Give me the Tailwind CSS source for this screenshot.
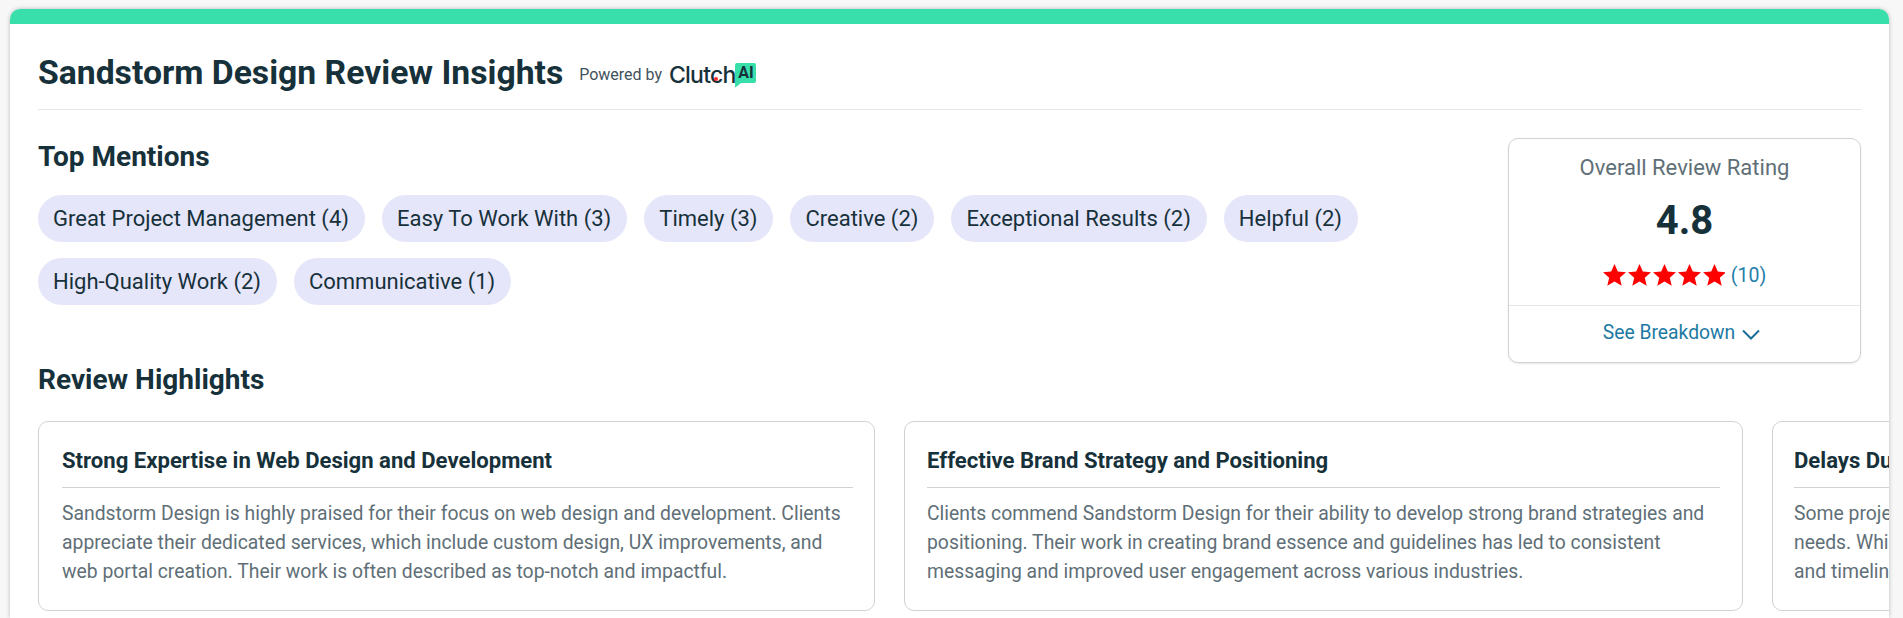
<!DOCTYPE html>
<html lang="en">
<head>
    <meta charset="UTF-8">
    <title>Sandstorm Design Review Insights</title>
    <script src="https://cdn.jsdelivr.net/npm/@tailwindcss/browser@4"></script>
</head>
<body class="bg-[#f7f7f7] font-[Roboto,sans-serif] text-[#17313b] h-[618px] overflow-hidden">
    <div class="pt-[9px] pl-[10px] w-[1889px]">
        <div class="bg-white h-[609px] rounded-t-[10px] overflow-hidden shadow-[0_0_4px_rgba(0,0,0,0.25)]">
            <div class="h-[15px] bg-[#38dfab]"></div>

            <div class="px-[28px]">
                <!-- Header -->
                <div class="h-[86px] pt-[25px] border-b border-[#e6e6e6] flex items-start">
                    <h1 class="text-[33.7px] leading-[48px] font-bold whitespace-nowrap">Sandstorm Design Review Insights</h1>
                    <div class="flex items-center ml-[16px] mt-[13px]">
                        <span class="text-[16px] leading-[24px] text-[#3f525c] whitespace-nowrap">Powered by</span>
                        <span class="relative ml-[7px] text-[23px] leading-[24px] font-medium font-[Inter,sans-serif] tracking-[-0.8px] text-[#17313b]">Clutch<span class="absolute left-[45px] top-[14px] w-[4px] h-[4px] rounded-full bg-[#ff2a2a]"></span></span>
                        <span class="relative translate-y-[1px] w-[21px] h-[25px] flex">
                            <svg class="absolute inset-0" width="21" height="25" viewBox="0 0 21 25"><path d="M2 0h17a2 2 0 0 1 2 2v16a2 2 0 0 1-2 2H6l-5 4a.6.6 0 0 1-1-.5V2a2 2 0 0 1 2-2z" fill="#38dfab"/></svg>
                            <span class="relative w-full text-center text-[16px] leading-[20px] font-bold">AI</span>
                        </span>
                    </div>
                </div>

                <div class="flex justify-between">
                    <!-- Top mentions -->
                    <div class="w-[1420px]">
                        <h2 class="mt-[29px] text-[28px] leading-[36px] font-bold">Top Mentions</h2>
                        <div class="mt-[20px] flex flex-wrap gap-x-[17px] gap-y-[16px] text-[22px] leading-[30px] w-[1420px]">
                            <span class="bg-[#e6e6fa] rounded-full pl-[15px] pr-[16px] py-[8.5px]">Great Project Management (4)</span>
                            <span class="bg-[#e6e6fa] rounded-full pl-[15px] pr-[16px] py-[8.5px]">Easy To Work With (3)</span>
                            <span class="bg-[#e6e6fa] rounded-full pl-[15px] pr-[16px] py-[8.5px]">Timely (3)</span>
                            <span class="bg-[#e6e6fa] rounded-full pl-[15px] pr-[16px] py-[8.5px]">Creative (2)</span>
                            <span class="bg-[#e6e6fa] rounded-full pl-[15px] pr-[16px] py-[8.5px]">Exceptional Results (2)</span>
                            <span class="bg-[#e6e6fa] rounded-full pl-[15px] pr-[16px] py-[8.5px]">Helpful (2)</span>
                            <span class="bg-[#e6e6fa] rounded-full pl-[15px] pr-[16px] py-[8.5px]">High-Quality Work (2)</span>
                            <span class="bg-[#e6e6fa] rounded-full pl-[15px] pr-[16px] py-[8.5px]">Communicative (1)</span>
                        </div>
                    </div>

                    <!-- Rating box -->
                    <div class="mt-[28px] w-[353px] h-[225px] border border-[#d2d2d2] rounded-[10px] shadow-[0_1px_2px_rgba(0,0,0,0.1)] flex flex-col items-center">
                        <div class="mt-[14px] text-[22px] leading-[30px] text-[#5f6f77]">Overall Review Rating</div>
                        <div class="mt-[14px] text-[40px] leading-[48px] font-bold">4.8</div>
                        <div class="mt-[17px] h-[28px] flex items-center">
                            <svg class="w-[122px] h-[24px]" viewBox="0 0 122 24" fill="#ff0000">
                                <path d="M11.500 0l3.300 7.600 8.200.7-6.200 5.400 1.900 8-7.200-4.300-7.200 4.300 1.900-8L0 8.300l8.200-.7z"/>
                                <path transform="translate(25)" d="M11.500 0l3.300 7.600 8.200.7-6.200 5.400 1.900 8-7.200-4.300-7.200 4.300 1.900-8L0 8.300l8.200-.7z"/>
                                <path transform="translate(50)" d="M11.500 0l3.300 7.600 8.200.7-6.200 5.400 1.900 8-7.200-4.300-7.200 4.300 1.900-8L0 8.300l8.200-.7z"/>
                                <path transform="translate(75)" d="M11.500 0l3.300 7.600 8.200.7-6.200 5.400 1.900 8-7.200-4.300-7.200 4.300 1.900-8L0 8.300l8.200-.7z"/>
                                <path transform="translate(100)" d="M11.500 0l3.300 7.600 8.200.7-6.200 5.400 1.900 8-7.200-4.300-7.200 4.300 1.900-8L0 8.300l8.200-.7z"/>
                            </svg>
                            <span class="ml-[6px] text-[19.5px] text-[#1f7ea8]">(10)</span>
                        </div>
                        <div class="mt-[15px] pb-[2px] pr-[6px] w-full border-t border-[#e6e6e6] flex-1 flex items-center justify-center text-[19.3px] text-[#1d7aa3]">
                            See Breakdown
                            <svg class="ml-[7px] mt-[2px]" width="18" height="11" viewBox="0 0 18 11" fill="none" stroke="#1a6f96" stroke-width="2"><path d="M1 1.500l8 8 8-8"/></svg>
                        </div>
                    </div>
                </div>

                <h2 class="text-[28px] leading-[36px] mt-[-1px] font-bold">Review Highlights</h2>

                <!-- Highlights row -->
                <div class="mt-[23px] flex gap-[29px] w-[1851px]">
                    <div class="w-[837px] h-[190px] shrink-0 border border-[#d2d2d2] rounded-[10px] pl-[23px] pr-[21px]">
                        <h3 class="h-[66px] pt-[24px] border-b border-[#d2d2d2] text-[22.1px] leading-[28px] font-bold whitespace-nowrap">Strong Expertise in Web Design and Development</h3>
                        <p class="mt-[12px] text-[19.35px] leading-[28.8px] text-[#5f6f77]">Sandstorm Design is highly praised for their focus on web design and development. Clients appreciate their dedicated services, which include custom design, UX improvements, and web portal creation. Their work is often described as top-notch and impactful.</p>
                    </div>
                    <div class="w-[839px] h-[190px] shrink-0 border border-[#d2d2d2] rounded-[10px] px-[22px]">
                        <h3 class="h-[66px] pt-[24px] border-b border-[#d2d2d2] text-[22.1px] leading-[28px] font-bold whitespace-nowrap">Effective Brand Strategy and Positioning</h3>
                        <p class="mt-[12px] text-[19.35px] leading-[28.8px] text-[#5f6f77]">Clients commend Sandstorm Design for their ability to develop strong brand strategies and positioning. Their work in creating brand essence and guidelines has led to consistent messaging and improved user engagement across various industries.</p>
                    </div>
                    <div class="w-[838px] h-[190px] shrink-0 border border-[#d2d2d2] rounded-[10px] pl-[21px] pr-[22px]">
                        <h3 class="h-[66px] pt-[24px] border-b border-[#d2d2d2] text-[22.1px] leading-[28px] font-bold whitespace-nowrap">Delays Due to Client Needs</h3>
                        <p class="mt-[12px] text-[19.35px] leading-[28.8px] text-[#5f6f77] whitespace-nowrap">Some projects experienced delays, often because of changing client<br>needs. While the team remained responsive, clients should confirm scope<br>and timelines early to keep work on schedule and avoid surprises.</p>
                    </div>
                </div>
            </div>
        </div>
    </div>
</body>
</html>
